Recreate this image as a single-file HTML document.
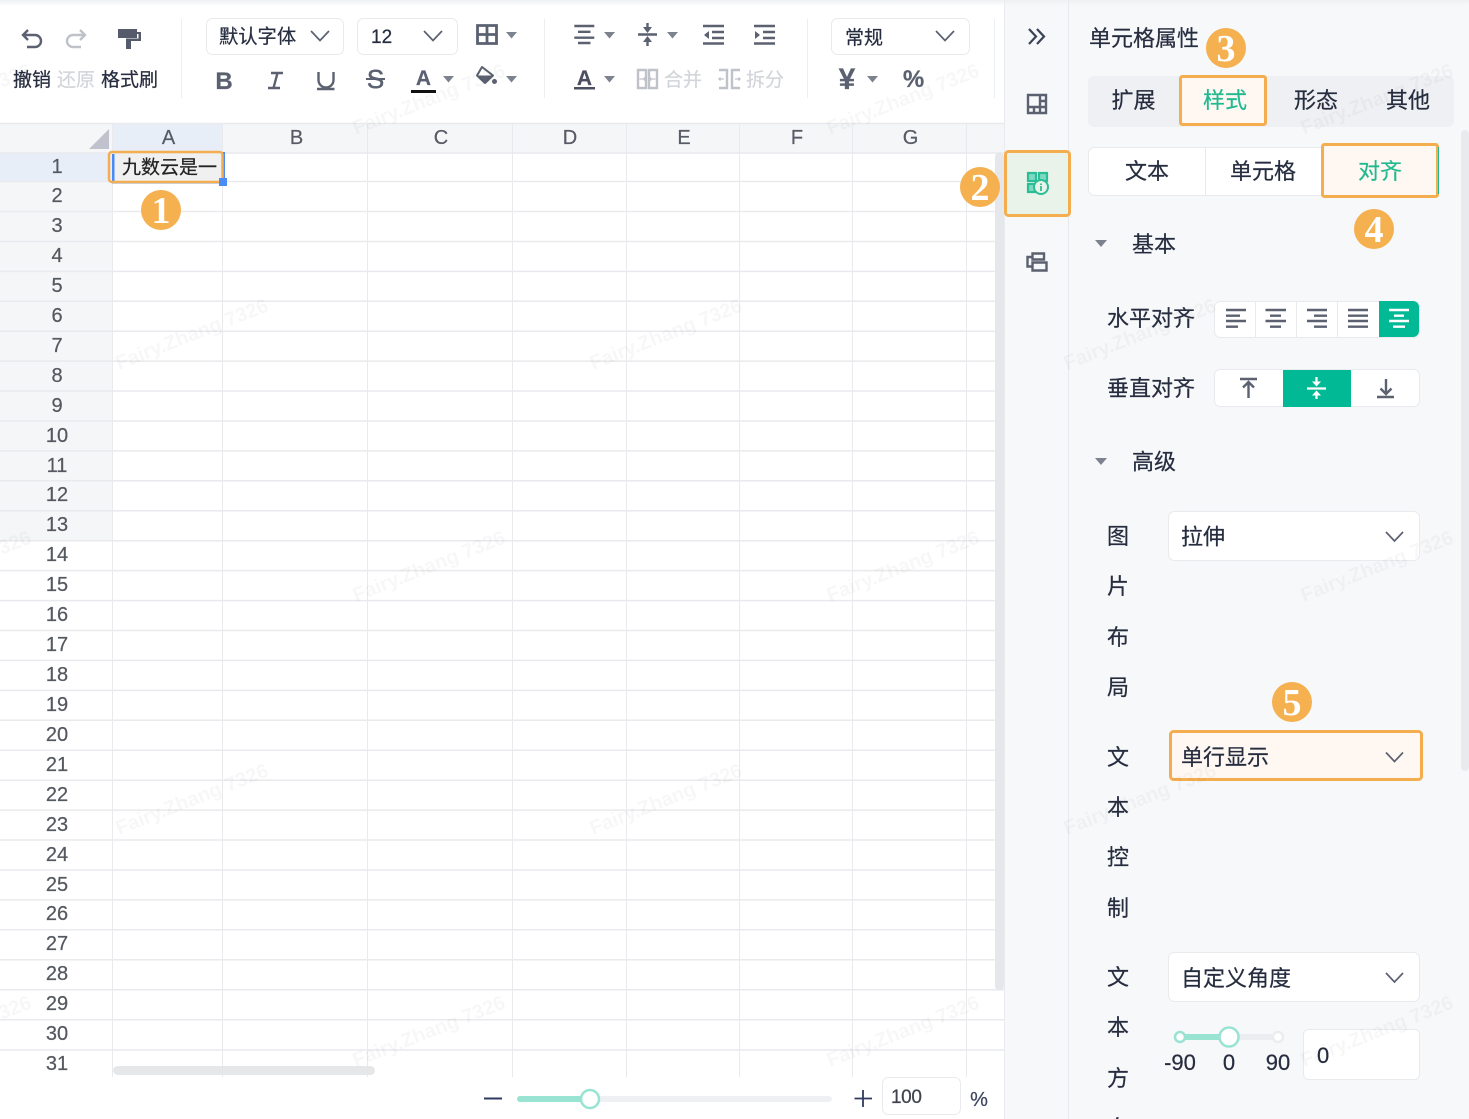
<!DOCTYPE html>
<html lang="zh">
<head>
<meta charset="utf-8">
<title>单元格属性</title>
<style>
html,body{margin:0;padding:0;background:#fff;width:1469px;height:1119px;overflow:hidden}
svg{display:block}
text{font-family:"Liberation Sans","Noto Sans CJK SC",sans-serif;color:#262d3f;fill:currentColor;stroke:currentColor;stroke-width:.22}
.t19{font-size:19px}
.t22{font-size:22px}
.m{text-anchor:middle}
.r{font-size:20px;text-anchor:middle;color:#55595f}
.c{font-size:20px;text-anchor:middle;color:#565b66}
.gh line{stroke:#e9eaed;stroke-width:1.5}
.gv line{stroke:#e9eaed;stroke-width:1}
.ic{fill:none;stroke:#5b6170;stroke-width:2.4}
.lt{fill:none;stroke:#bfc2c9;stroke-width:2.4}
.tri{fill:#7d828f}
.chev{fill:none;stroke:#5b6170;stroke-width:1.7}
.num{font-family:"Liberation Serif",serif;font-size:38px;font-weight:bold;color:#fff;text-anchor:middle;stroke:none}
.box{fill:#fff;stroke:#e9eaee;stroke-width:1}
.hl{fill:#fff8f2;stroke:#f5ae4f;stroke-width:3}
.wm{font-size:20px;font-weight:bold;color:#000;fill-opacity:.033;stroke:none}
</style>
</head>
<body>
<svg width="1469" height="1119" viewBox="0 0 1469 1119" xmlns="http://www.w3.org/2000/svg">
<defs>
<linearGradient id="top" x1="0" y1="0" x2="0" y2="1"><stop offset="0" stop-color="#eef0f2"/><stop offset="1" stop-color="#eef0f2" stop-opacity="0"/></linearGradient>
</defs>
<rect width="1469" height="1119" fill="#fff"/>

<!-- grid header -->
<rect x="0" y="123" width="1004" height="30" fill="#f5f6f8"/>
<rect x="112" y="123" width="110" height="30" fill="#e8eef8"/>
<rect x="0" y="153" width="112" height="28" fill="#e8eef8"/>
<rect x="0" y="181" width="112" height="360" fill="#f5f6f8"/>
<path d="M89 149H109V129Z" fill="#c0c3ce"/>
<rect x="112" y="153" width="110" height="28" fill="#f0f0f0"/>

<!-- grid lines -->
<g class="gh">
<line x1="0" x2="1004" y1="123.5" y2="123.5"/>
<line x1="0" x2="1004" y1="153" y2="153"/>
<line x1="0" x2="1004" y1="181.5" y2="181.5"/>
<line x1="0" x2="1004" y1="211.5" y2="211.5"/>
<line x1="0" x2="1004" y1="241.5" y2="241.5"/>
<line x1="0" x2="1004" y1="271.4" y2="271.4"/>
<line x1="0" x2="1004" y1="301.3" y2="301.3"/>
<line x1="0" x2="1004" y1="331.2" y2="331.2"/>
<line x1="0" x2="1004" y1="361.1" y2="361.1"/>
<line x1="0" x2="1004" y1="391" y2="391"/>
<line x1="0" x2="1004" y1="421" y2="421"/>
<line x1="0" x2="1004" y1="450.9" y2="450.9"/>
<line x1="0" x2="1004" y1="480.8" y2="480.8"/>
<line x1="0" x2="1004" y1="510.8" y2="510.8"/>
<line x1="0" x2="1004" y1="540.7" y2="540.7"/>
<line x1="0" x2="1004" y1="570.6" y2="570.6"/>
<line x1="0" x2="1004" y1="600.6" y2="600.6"/>
<line x1="0" x2="1004" y1="630.5" y2="630.5"/>
<line x1="0" x2="1004" y1="660.4" y2="660.4"/>
<line x1="0" x2="1004" y1="690.4" y2="690.4"/>
<line x1="0" x2="1004" y1="720.3" y2="720.3"/>
<line x1="0" x2="1004" y1="750.2" y2="750.2"/>
<line x1="0" x2="1004" y1="780.2" y2="780.2"/>
<line x1="0" x2="1004" y1="810.1" y2="810.1"/>
<line x1="0" x2="1004" y1="840" y2="840"/>
<line x1="0" x2="1004" y1="870" y2="870"/>
<line x1="0" x2="1004" y1="899.9" y2="899.9"/>
<line x1="0" x2="1004" y1="929.8" y2="929.8"/>
<line x1="0" x2="1004" y1="959.8" y2="959.8"/>
<line x1="0" x2="1004" y1="989.7" y2="989.7"/>
<line x1="0" x2="1004" y1="1019.7" y2="1019.7"/>
<line x1="0" x2="1004" y1="1050" y2="1050"/>
</g>
<g class="gv">
<line x1="112.5" x2="112.5" y1="123" y2="1077"/>
<line x1="222.5" x2="222.5" y1="123" y2="1077"/>
<line x1="367.5" x2="367.5" y1="123" y2="1077"/>
<line x1="512.5" x2="512.5" y1="123" y2="1077"/>
<line x1="626.5" x2="626.5" y1="123" y2="1077"/>
<line x1="739.5" x2="739.5" y1="123" y2="1077"/>
<line x1="852.5" x2="852.5" y1="123" y2="1077"/>
<line x1="966.5" x2="966.5" y1="123" y2="1077"/>
</g>

<!-- column labels -->
<text class="c" x="168.5" y="144">A</text>
<text class="c" x="296.5" y="144">B</text>
<text class="c" x="441" y="144">C</text>
<text class="c" x="570" y="144">D</text>
<text class="c" x="684" y="144">E</text>
<text class="c" x="797" y="144">F</text>
<text class="c" x="910.5" y="144">G</text>

<!-- row labels -->
<text class="r" x="57" y="173">1</text>
<text class="r" x="57" y="202">2</text>
<text class="r" x="57" y="232">3</text>
<text class="r" x="57" y="262">4</text>
<text class="r" x="57" y="292">5</text>
<text class="r" x="57" y="322">6</text>
<text class="r" x="57" y="352">7</text>
<text class="r" x="57" y="382">8</text>
<text class="r" x="57" y="412">9</text>
<text class="r" x="57" y="442">10</text>
<text class="r" x="57" y="472">11</text>
<text class="r" x="57" y="501">12</text>
<text class="r" x="57" y="531">13</text>
<text class="r" x="57" y="561">14</text>
<text class="r" x="57" y="591">15</text>
<text class="r" x="57" y="621">16</text>
<text class="r" x="57" y="651">17</text>
<text class="r" x="57" y="681">18</text>
<text class="r" x="57" y="711">19</text>
<text class="r" x="57" y="741">20</text>
<text class="r" x="57" y="771">21</text>
<text class="r" x="57" y="801">22</text>
<text class="r" x="57" y="831">23</text>
<text class="r" x="57" y="861">24</text>
<text class="r" x="57" y="891">25</text>
<text class="r" x="57" y="920">26</text>
<text class="r" x="57" y="950">27</text>
<text class="r" x="57" y="980">28</text>
<text class="r" x="57" y="1010">29</text>
<text class="r" x="57" y="1040">30</text>
<text class="r" x="57" y="1070">31</text>

<!-- selected cell -->
<rect x="112" y="154" width="2.5" height="28" fill="#4a8bf5"/>
<rect x="223" y="152" width="2" height="30" fill="#4a8bf5"/>
<rect x="112" y="182" width="110" height="1.5" fill="#4a8bf5"/>
<rect x="109" y="152" width="113.5" height="30" rx="3" fill="none" stroke="#f5ae4f" stroke-width="2.5"/>
<rect x="219" y="178" width="8" height="8" fill="#4a8bf5"/>
<text x="122" y="173.5" class="t19" style="color:#222">九数云是一</text>

<!-- scrollbars -->
<rect x="995" y="153" width="9" height="837" rx="4" fill="#e6e7ea"/>
<rect x="113" y="1066" width="262" height="9" rx="4.5" fill="#e3e4e6" fill-opacity=".9"/>

<!-- toolbar -->
<rect x="0" y="0" width="1469" height="6" fill="url(#top)"/>
<path class="ic" d="M28 30L23 35L28 40M23 35H35A6 6 0 0 1 35 47H27"/>
<path class="lt" d="M80 30L85 35L80 40M85 35H73A6 6 0 0 0 73 47H81"/>
<path d="M118 29H137V38H118ZM137 32H141V41H131V49H126V38.5H138.5V34H137Z" fill="#555b6a"/>
<text x="13" y="86" class="t19">撤销</text>
<text x="57" y="86" class="t19" style="color:#d3d5da">还原</text>
<text x="101" y="86" class="t19">格式刷</text>
<line x1="181.5" x2="181.5" y1="19" y2="98" stroke="#eceef1"/>

<rect class="box" x="206.5" y="18.5" width="137" height="36" rx="6"/>
<text x="219" y="43" class="t19" style="font-size:19.3px">默认字体</text>
<path class="chev" d="M311 31L320 40.5L329 31"/>
<rect class="box" x="357.5" y="18.5" width="100" height="36" rx="6"/>
<text x="371" y="43" class="t19">12</text>
<path class="chev" d="M424 31L433 40.5L442 31"/>
<path class="ic" style="stroke-width:2.8" d="M477.5 25.5H496.5V43.5H477.5ZM487 25.5V43.5M477.5 34.5H496.5"/>
<path class="tri" d="M506 32H517L511.5 38.5Z"/>

<text x="224" y="89" class="m" style="font-size:24px;font-weight:bold;color:#5b6170">B</text>
<path class="ic" d="M271 73H283M268 88H280M277.5 73L273.5 88"/>
<path class="ic" d="M318.5 72V80A7.5 7.5 0 0 0 333.5 80V72M317 89H334.5"/>
<text x="375.5" y="88" class="m" style="font-size:26px;color:#5b6170;stroke-width:.5">S</text>
<line x1="366" x2="385" y1="79" y2="79" stroke="#5b6170" stroke-width="2"/>
<text x="423.5" y="85" class="m" style="font-size:21px;font-weight:bold;color:#5b6170">A</text>
<rect x="411" y="90" width="25" height="3" fill="#111"/>
<path class="tri" d="M443 76H454L448.5 82.5Z"/>
<path d="M482 67L493 75.5L485 83L477 75.5Z" fill="#fff" stroke="#5b6170" stroke-width="2" stroke-linejoin="round"/>
<path d="M477 75.5H493L485 83Z" fill="#5b6170"/>
<circle cx="494.5" cy="81.500" r="2.500" fill="#5b6170"/>
<path class="tri" d="M506 76H517L511.5 82.5Z"/>
<line x1="544.5" x2="544.5" y1="19" y2="98" stroke="#eceef1"/>

<path class="ic" d="M574.3 26H594.3M578 31.8H590.5M574.3 37.7H594.3M578 43H590.5"/>
<path class="tri" d="M604 32H615L609.5 38.5Z"/>
<path class="ic" d="M638 34.500H657M647.500 23V31M647.500 38V46"/>
<path d="M643 27H652L647.500 33ZM643 42H652L647.500 36Z" fill="#5b6170"/>
<path class="tri" d="M667 32H678L672.5 38.5Z"/>
<path class="ic" d="M703 26H724M712 32H724M712 38H724M703 43.5H724"/>
<path d="M709 31V39L704 35Z" fill="#5b6170"/>
<path class="ic" d="M754 26H775M763 32H775M763 38H775M754 43.5H775"/>
<path d="M755 31V39L760 35Z" fill="#5b6170"/>

<text x="584.5" y="85" class="m" style="font-size:21px;font-weight:bold;color:#4a5060">A</text>
<rect x="574" y="87" width="21" height="2.5" fill="#4a5060"/>
<path class="tri" d="M604 76H615L609.5 82.5Z"/>
<path class="lt" d="M638 70H646V88H638ZM649 70H657V88H649Z"/>
<path d="M639.500 79H645M644 77.500L645.500 79L644 80.500M655.500 79H650M651 77.500L649.500 79L651 80.500" stroke="#bfc2c9" stroke-width="1.300" fill="none"/>
<text x="664" y="86" class="t19" style="color:#d3d5da">合并</text>
<path class="lt" d="M719 70H727V88H719M740 70H732V88H740"/>
<path d="M719 79H724M720.500 77.500L719 79L720.500 80.500M740 79H735M738.500 77.500L740 79L738.500 80.500" stroke="#bfc2c9" stroke-width="1.300" fill="none"/>
<text x="746" y="86" class="t19" style="color:#d3d5da">拆分</text>
<line x1="807.5" x2="807.5" y1="19" y2="98" stroke="#eceef1"/>

<rect class="box" x="831.5" y="18.5" width="138" height="36" rx="6"/>
<text x="845" y="44" class="t19">常规</text>
<path class="chev" d="M936 31L945 40.5L954 31"/>
<text x="847" y="89" class="m" style="font-size:30px;font-weight:bold;color:#5b6170">¥</text>
<path class="tri" d="M867 76H878L872.5 82.5Z"/>
<text x="913.5" y="87" class="m" style="font-size:24px;font-weight:bold;color:#5b6170">%</text>
<line x1="994.5" x2="994.5" y1="19" y2="98" stroke="#eceef1"/>

<!-- rail + panel -->
<rect x="1005" y="0" width="464" height="1119" fill="#f7f8fa"/>
<rect x="1005" y="0" width="464" height="6" fill="url(#top)"/>
<line x1="1004.5" x2="1004.5" y1="0" y2="1119" stroke="#eaebee"/>
<line x1="1068.5" x2="1068.5" y1="0" y2="1119" stroke="#e8e9ed"/>
<path fill="none" stroke="#3a4257" stroke-width="2.2" d="M1029 29L1036 36.5L1029 44M1037 29L1044 36.5L1037 44"/>
<path class="ic" d="M1028 95H1046V113H1028ZM1040 95V113M1028 107H1046M1034 107V113M1040 101H1046"/>
<rect x="1005.5" y="151.5" width="64" height="64" rx="3" fill="#e9f3e9" stroke="#f5ae4f" stroke-width="3"/>
<g fill="#7fd9c0" stroke="#2bbd97" stroke-width="2.2">
<rect x="1028" y="173" width="8" height="8"/>
<rect x="1039" y="173" width="8" height="8"/>
<rect x="1028" y="184" width="8" height="8"/>
</g>
<circle cx="1041" cy="187" r="7" fill="#e9f3e9" stroke="#2bbd97" stroke-width="2"/>
<path d="M1041 183.500V185M1041 186V191" stroke="#2bbd97" stroke-width="1.800" fill="none"/>
<path class="ic" d="M1032.5 253.5H1044V259.5H1032.5ZM1032.5 262.5H1046.5V270.5H1032.5ZM1032.5 257H1027.5V266.5H1032.5"/>

<text x="1089" y="46" class="t22">单元格属性</text>
<rect x="1088" y="76" width="366" height="51" rx="6" fill="#eff0f3"/>
<rect class="hl" x="1180.5" y="76.5" width="85" height="48" rx="2"/>
<text x="1133.5" y="108" class="t22 m">扩展</text>
<text x="1225" y="108" class="t22 m" style="color:#22b990">样式</text>
<text x="1316" y="108" class="t22 m">形态</text>
<text x="1408" y="108" class="t22 m">其他</text>

<rect class="box" x="1088.5" y="147.5" width="349" height="48" rx="6"/>
<line x1="1205.5" x2="1205.5" y1="147" y2="195" stroke="#e9eaee"/>
<rect class="hl" x="1322.5" y="144.5" width="115" height="52" rx="2"/>
<line x1="1438.5" x2="1438.5" y1="147" y2="194" stroke="#22b990"/>
<text x="1147" y="179" class="t22 m">文本</text>
<text x="1263" y="179" class="t22 m">单元格</text>
<text x="1380" y="179" class="t22 m" style="color:#22b990">对齐</text>

<path class="tri" d="M1095 240H1107L1101 247Z"/>
<text x="1132" y="252" class="t22">基本</text>

<text x="1107" y="326" class="t22">水平对齐</text>
<rect class="box" x="1214.5" y="301.5" width="205" height="36" rx="6"/>
<path d="M1379 301H1413A6 6 0 0 1 1419 307V331A6 6 0 0 1 1413 337H1379Z" fill="#02b996"/>
<path stroke="#e9eaee" d="M1255.5 301V337M1296.5 301V337M1337.5 301V337"/>
<path class="ic" d="M1226 310H1246M1226 315.7H1240M1226 321H1246M1226 326.7H1238"/>
<path class="ic" d="M1265.5 310H1286M1270 315.7H1281M1265.5 321H1286M1270 326.7H1281"/>
<path class="ic" d="M1307 310H1327M1314 315.7H1327M1307 321H1327M1314 326.7H1327"/>
<path class="ic" d="M1348 310H1368M1348 315.7H1368M1348 321H1368M1348 326.7H1368"/>
<path fill="none" stroke="#fff" stroke-width="2.4" d="M1389 310H1409M1394 315.7H1404M1389 321H1409M1393 326.7H1405"/>

<text x="1107" y="396" class="t22">垂直对齐</text>
<rect class="box" x="1214.5" y="369.5" width="205" height="37" rx="6"/>
<rect x="1283" y="370" width="68" height="37" fill="#02b996"/>
<path class="ic" d="M1240 379H1257M1248.5 383V398M1243 387.5L1248.5 382L1254 387.5"/>
<path fill="none" stroke="#fff" stroke-width="2.2" d="M1307 388.5H1326M1316.5 377V384M1316.5 393V399"/>
<path d="M1312 381.5H1321L1316.5 386.5ZM1312 395.5H1321L1316.5 390.5Z" fill="#fff"/>
<path class="ic" d="M1377 397H1394M1386 379V394M1380.5 388.5L1386 394L1391.5 388.5"/>

<path class="tri" d="M1095 458H1107L1101 465Z"/>
<text x="1132" y="469.5" class="t22">高级</text>

<text x="1118" y="544" class="t22 m">图</text>
<text x="1118" y="594" class="t22 m">片</text>
<text x="1118" y="645" class="t22 m">布</text>
<text x="1118" y="695" class="t22 m">局</text>
<text x="1118" y="765" class="t22 m">文</text>
<text x="1118" y="815" class="t22 m">本</text>
<text x="1118" y="865" class="t22 m">控</text>
<text x="1118" y="916" class="t22 m">制</text>
<text x="1118" y="985" class="t22 m">文</text>
<text x="1118" y="1035" class="t22 m">本</text>
<text x="1118" y="1086" class="t22 m">方</text>
<text x="1118" y="1136" class="t22 m">向</text>

<rect class="box" x="1168.5" y="511.5" width="251" height="49" rx="6"/>
<text x="1181" y="544.5" class="t22">拉伸</text>
<path class="chev" d="M1386 532L1394.5 541L1403 532"/>

<rect class="hl" x="1170.5" y="731.5" width="251" height="48" rx="3"/>
<text x="1181" y="765" class="t22">单行显示</text>
<path class="chev" d="M1386 752.5L1394.5 761.5L1403 752.5"/>

<rect class="box" x="1168.5" y="952.5" width="251" height="49" rx="6"/>
<text x="1181" y="986" class="t22">自定义角度</text>
<path class="chev" d="M1386 973L1394.5 982L1403 973"/>

<rect x="1175" y="1034" width="108" height="6" rx="3" fill="#ecedf1"/>
<rect x="1175" y="1034" width="54" height="6" fill="#98e3d2"/>
<circle cx="1180" cy="1037" r="5" fill="#fff" stroke="#98e3d2" stroke-width="2.5"/>
<circle cx="1278" cy="1037" r="5" fill="#fff" stroke="#ecedf1" stroke-width="2.5"/>
<circle cx="1229" cy="1037" r="9.5" fill="#fff" stroke="#98e3d2" stroke-width="2.5"/>
<text x="1180" y="1070" class="t22 m">-90</text>
<text x="1229" y="1070" class="t22 m">0</text>
<text x="1278" y="1070" class="t22 m">90</text>
<rect class="box" x="1303.5" y="1029.5" width="116" height="50" rx="5"/>
<text x="1317" y="1063" class="t22">0</text>
<rect x="1461" y="130" width="8" height="641" rx="4" fill="#e9eaed"/>

<!-- zoom bar -->
<path d="M484 1098.5H502" stroke="#2f3a5f" stroke-width="2"/>
<rect x="517" y="1096" width="315" height="6" rx="3" fill="#eff0f3"/>
<rect x="517" y="1096" width="73" height="6" rx="3" fill="#98e3d2"/>
<circle cx="590" cy="1099" r="9" fill="#fff" stroke="#98e3d2" stroke-width="2.5"/>
<path d="M854.5 1098.5H872M863 1090V1107" stroke="#2f3a5f" stroke-width="1.8" fill="none"/>
<rect class="box" x="882.5" y="1077.5" width="78" height="37" rx="6"/>
<text x="891" y="1103" class="t19" style="color:#3d4450;letter-spacing:-.4px">100</text>
<text x="979" y="1106" class="m" style="font-size:20px;color:#3d4560">%</text>

<!-- number badges -->
<circle cx="161" cy="210" r="20" fill="#f5b04f"/><text class="num" x="161" y="223">1</text>
<circle cx="980" cy="187" r="20" fill="#f5b04f"/><text class="num" x="980" y="200">2</text>
<circle cx="1226" cy="48" r="20" fill="#f5b04f"/><text class="num" x="1226" y="61">3</text>
<circle cx="1374" cy="229" r="20" fill="#f5b04f"/><text class="num" x="1374" y="242">4</text>
<circle cx="1292" cy="702" r="20" fill="#f5b04f"/><text class="num" x="1292" y="715">5</text>

<!-- watermarks -->
<text class="wm" transform="translate(-118 135) rotate(-21.5)">Fairy.Zhang 7326</text>
<text class="wm" transform="translate(356 135) rotate(-21.5)">Fairy.Zhang 7326</text>
<text class="wm" transform="translate(830 135) rotate(-21.5)">Fairy.Zhang 7326</text>
<text class="wm" transform="translate(1304 135) rotate(-21.5)">Fairy.Zhang 7326</text>
<text class="wm" transform="translate(119 370) rotate(-21.5)">Fairy.Zhang 7326</text>
<text class="wm" transform="translate(593 370) rotate(-21.5)">Fairy.Zhang 7326</text>
<text class="wm" transform="translate(1067 370) rotate(-21.5)">Fairy.Zhang 7326</text>
<text class="wm" transform="translate(-118 602) rotate(-21.5)">Fairy.Zhang 7326</text>
<text class="wm" transform="translate(356 602) rotate(-21.5)">Fairy.Zhang 7326</text>
<text class="wm" transform="translate(830 602) rotate(-21.5)">Fairy.Zhang 7326</text>
<text class="wm" transform="translate(1304 602) rotate(-21.5)">Fairy.Zhang 7326</text>
<text class="wm" transform="translate(119 835) rotate(-21.5)">Fairy.Zhang 7326</text>
<text class="wm" transform="translate(593 835) rotate(-21.5)">Fairy.Zhang 7326</text>
<text class="wm" transform="translate(1067 835) rotate(-21.5)">Fairy.Zhang 7326</text>
<text class="wm" transform="translate(-118 1067) rotate(-21.5)">Fairy.Zhang 7326</text>
<text class="wm" transform="translate(356 1067) rotate(-21.5)">Fairy.Zhang 7326</text>
<text class="wm" transform="translate(830 1067) rotate(-21.5)">Fairy.Zhang 7326</text>
<text class="wm" transform="translate(1304 1067) rotate(-21.5)">Fairy.Zhang 7326</text>
</svg>
</body>
</html>
